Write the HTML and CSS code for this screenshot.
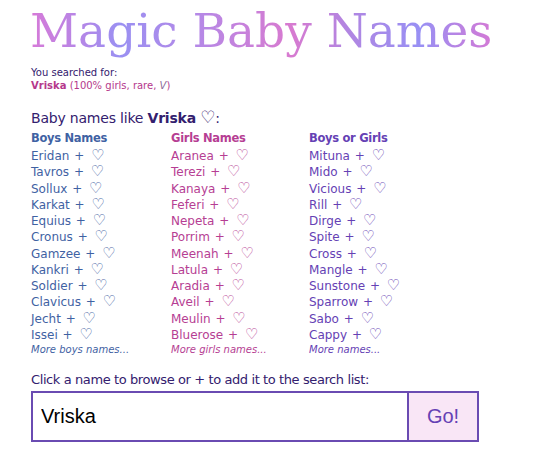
FILE: index.html
```html
<!DOCTYPE html>
<html lang="en">
<head>
  <meta charset="UTF-8">
  <title>Magic Baby Names</title>
  <meta name="viewport" content="width=device-width, initial-scale=1">
  <link rel="stylesheet" href="styles.css">
</head>
<body>

  <div class="page">
    <h1 class="logo">Magic Baby Names</h1>

    <div class="searched">
      <div>You searched for:</div>
      <div class="query"><b>Vriska</b> (100% girls, rare, <i>V</i>)</div>
    </div>

    <h2 class="like">Baby names like <b>Vriska</b> <span class="heart">♡</span>:</h2>

    <div class="columns">
      <div class="col boys">
        <h3>Boys Names</h3>
        <ul id="boys"></ul>
        <a class="more" href="#">More boys names...</a>
      </div>
      <div class="col girls">
        <h3>Girls Names</h3>
        <ul id="girls"></ul>
        <a class="more" href="#">More girls names...</a>
      </div>
      <div class="col both">
        <h3>Boys or Girls</h3>
        <ul id="both"></ul>
        <a class="more" href="#">More names...</a>
      </div>
    </div>

    <p class="hint">Click a name to browse or + to add it to the search list:</p>

    <form class="search" onsubmit="return false">
      <input type="text" value="Vriska">
      <button type="submit">Go!</button>
    </form>
  </div>

  <script>
    const lists = {
      boys: ['Eridan', 'Tavros', 'Sollux', 'Karkat', 'Equius', 'Cronus', 'Gamzee', 'Kankri', 'Soldier', 'Clavicus', 'Jecht', 'Issei'],
      girls: ['Aranea', 'Terezi', 'Kanaya', 'Feferi', 'Nepeta', 'Porrim', 'Meenah', 'Latula', 'Aradia', 'Aveil', 'Meulin', 'Bluerose'],
      both: ['Mituna', 'Mido', 'Vicious', 'Rill', 'Dirge', 'Spite', 'Cross', 'Mangle', 'Sunstone', 'Sparrow', 'Sabo', 'Cappy']
    };

    for (const id in lists) {
      document.getElementById(id).innerHTML = lists[id].map(name => `
        <li><a href="#">${name}</a> <span class="plus">+</span> <span class="heart">♡</span></li>
      `).join('');
    }
  </script>

</body>
</html>
```

FILE: styles.css
```css
body {
  font-family: "DejaVu Sans", Verdana, sans-serif;
  background: #fff;
  margin: 0;
  color: #33206e;
}

.page {
  padding: 0 31px;
}

.logo {
  font-family: "DejaVu Serif", serif;
  font-weight: normal;
  font-size: 47px;
  line-height: 58px;
  margin: 0 0 0 -1px;
  padding-top: 2px;
  letter-spacing: 0;
  background: linear-gradient(90deg, #d77ad8 0px, #9a90f2 90px, #b688e6 170px, #d87ad0 260px, #b086e2 320px, #9890f4 390px, #d27ad6 460px);
  -webkit-background-clip: text;
  background-clip: text;
  color: transparent;
  display: inline-block;
}

.searched {
  font-size: 10px;
  line-height: 12.5px;
  margin-top: 7px;
}

.query {
  color: #b5388c;
}

.query i {
  color: #8a6a9a;
}

.like {
  font-size: 14px;
  font-weight: normal;
  margin: 16px 0 0;
  line-height: 18px;
  letter-spacing: -0.2px;
}

.like .heart {
  font-size: 17px;
}

.columns {
  display: grid;
  grid-template-columns: 140px 138px 140px;
  margin-top: 3px;
}

.col h3 {
  font-size: 11.5px;
  letter-spacing: -0.3px;
  margin: 0 0 2px;
  line-height: 16px;
}

.col ul {
  list-style: none;
  margin: 0;
  padding: 0;
}

.col li {
  font-size: 12px;
  line-height: 16.25px;
}

.col a {
  color: inherit;
  text-decoration: none;
}

.col .plus {
  margin-left: 1px;
}

.col .heart {
  margin-left: 3px;
  font-size: 15px;
  line-height: 10px;
}

.col .more {
  display: block;
  font-style: italic;
  font-size: 10px;
  line-height: 14px;
}

.boys { color: #3f62a3; }
.girls { color: #b63e93; }
.both { color: #6541b4; }

.hint {
  font-size: 13px;
  letter-spacing: -0.4px;
  margin: 15px 0 3px;
  line-height: 16px;
}

.search {
  display: flex;
  width: 448px;
  height: 51px;
  border: 2px solid #6a4bb2;
  box-sizing: border-box;
}

.search input {
  flex: 1;
  min-width: 0;
  border: none;
  border-right: 2px solid #6a4bb2;
  padding: 0 8px;
  font-family: "Liberation Sans", Arial, sans-serif;
  font-size: 20px;
  color: #000;
  outline: none;
}

.search button {
  width: 68px;
  border: none;
  background: #f9e6f6;
  color: #6541b4;
  font-family: "Liberation Sans", Arial, sans-serif;
  font-size: 20px;
}
```
